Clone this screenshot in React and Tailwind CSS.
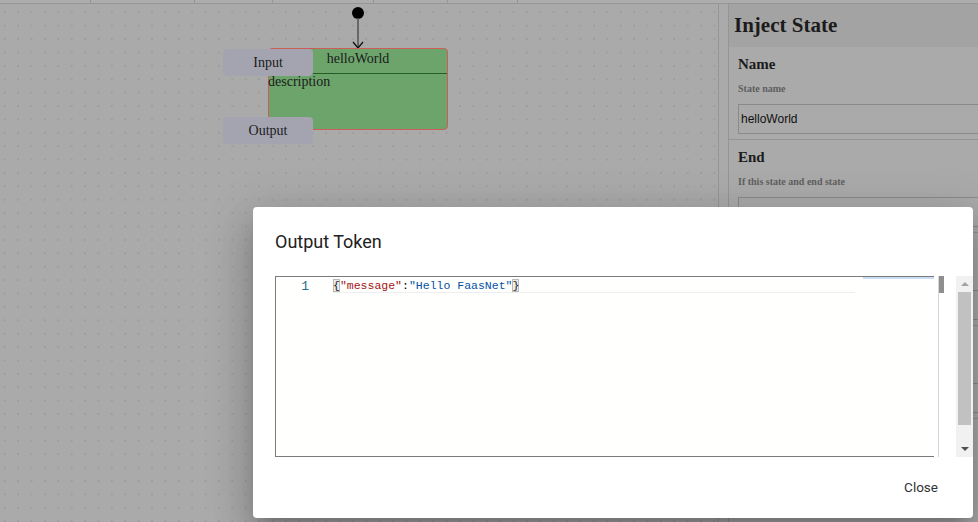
const sections = [
  { title: 'Name', label: 'State name', value: 'helloWorld' },
  { title: 'End', label: 'If this state and end state', value: 'True' },
  { title: 'Data', label: 'Inject data', value: '' },
  { title: 'Transition', label: 'Next state', value: '' },
];

function PanelSection({ title, label, value }) {
  return (
    <div className="border-b border-[#949494] px-[9px] pt-[8px] pb-[5px]">
      <div className="text-[15px] leading-[18px] font-bold">{title}</div>
      <div className="mt-[10px] text-[10px] leading-[12px] font-bold text-[#5f5f5f]">{label}</div>
      <div className="mt-[9px] h-[30px] w-[260px] border border-[#8a8a8a] px-[2px] flex items-center font-['Liberation_Sans',sans-serif] text-[12px] text-[#111]">
        {value}
      </div>
    </div>
  );
}

function Canvas() {
  return (
    <div className="relative w-[719px] border-r border-[#959595] bg-[radial-gradient(circle,#9d9d9d_0.8px,transparent_1px)] bg-[length:13.4px_13.4px] bg-[position:-2px_1.6px]">
      {/* start marker + arrow */}
      <svg className="absolute left-[350px] top-[3px]" width="16" height="42" viewBox="0 0 16 42">
        <circle cx="8" cy="6" r="6" fill="#000" />
        <line x1="8" y1="11" x2="8" y2="41" stroke="#505050" strokeWidth="1.5" />
        <polyline points="3,35 8,41 13,35" fill="none" stroke="#111" strokeWidth="1.3" />
      </svg>

      {/* state node */}
      <div className="absolute left-[268px] top-[44px] w-[180px] h-[82px] rounded-[4px] border border-[#cb5e59] bg-[#6ca46b]">
        <div className="h-[25px] border-b border-[#245f24] text-center text-[14px] leading-[18px] pt-[1px]">helloWorld</div>
        <div className="text-[14px] leading-[16px] -ml-px">description</div>
      </div>

      <div className="absolute left-[223px] top-[45px] w-[90px] h-[27px] rounded-[4px] bg-[#a4a4b1] flex items-center justify-center text-[14px]">
        Input
      </div>
      <div className="absolute left-[223px] top-[113px] w-[90px] h-[27px] rounded-[4px] bg-[#a4a4b1] flex items-center justify-center text-[14px]">
        Output
      </div>
    </div>
  );
}

function OutputDialog() {
  return (
    <div className="absolute left-[253px] top-[207px] w-[720px] h-[311px] rounded-[4px] bg-white shadow-[0_11px_15px_-7px_rgba(0,0,0,0.2),0_24px_38px_3px_rgba(0,0,0,0.14),0_9px_46px_8px_rgba(0,0,0,0.12)] font-['Roboto',sans-serif]">
      <div className="pl-[22px] pt-[23px] h-[69px] text-[18px] leading-[24px] text-[#212121]">Output Token</div>

      <div className="ml-[22px] flex h-[181px]">
        {/* editor */}
        <div className="flex w-[659px] border-l border-t border-b border-[#7a7a7a] bg-[#fffffe]">
          <div className="w-[57px] pr-[24px] pt-[2px] text-right font-['Liberation_Mono',monospace] text-[13px] leading-[15px] text-[#1f6f8b]">1</div>
          <div className="w-[530px]">
            <div className="w-[522px] h-[16px] pt-px border-b border-[#eeeeee] font-['Liberation_Mono',monospace] text-[11.5px] leading-[15px] whitespace-pre">
              <span className="bg-[#ececec] shadow-[inset_0_0_0_1px_#b9b9b9]">{'{'}</span>
              <span className="text-[#a31515]">"message"</span>
              <span className="text-black">:</span>
              <span className="text-[#0451a5]">"Hello FaasNet"</span>
              <span className="bg-[#ececec] shadow-[inset_0_0_0_1px_#b9b9b9]">{'}'}</span>
            </div>
          </div>
          <div className="flex-1">
            <div className="h-[2px] bg-[#c9def6]" />
          </div>
        </div>
        {/* overview ruler */}
        <div className="w-[10px] flex">
          <div className="w-[4px]" />
          <div className="w-[1px] bg-[#d6d6d6]" />
          <div className="w-[5px]">
            <div className="h-[17px] bg-[#8e8e8e]" />
          </div>
        </div>
        <div className="w-[12px]" />
        {/* scrollbar */}
        <div className="w-[17px] bg-[#f1f1f1] flex flex-col items-center">
          <div className="h-[16px] flex items-center justify-center">
            <div className="w-0 h-0 border-l-[4px] border-r-[4px] border-b-[4px] border-l-transparent border-r-transparent border-b-[#a3a3a3]" />
          </div>
          <div className="w-[13px] h-[133px] bg-[#c1c1c1]" />
          <div className="flex-1 flex items-end justify-center pb-[6px]">
            <div className="w-0 h-0 border-l-[4px] border-r-[4px] border-t-[4px] border-l-transparent border-r-transparent border-t-[#505050]" />
          </div>
        </div>
      </div>

      <div className="flex justify-end pr-[35px] pt-[22px]">
        <span className="text-[13.5px] leading-[16px] text-[#333]">Close</span>
      </div>
    </div>
  );
}

export default function App() {
  return (
    <div className="relative w-[978px] h-[522px] overflow-hidden bg-[#aaaaaa] font-['Liberation_Serif',serif] text-[#1b1b1b]">
      {/* toolbar strip */}
      <div className="flex h-[4px] border-b border-[#969696] bg-[#adadad]">
        <div className="w-[91px] border-r border-[#969696]" />
        <div className="w-[104px] border-r border-[#969696]" />
        <div className="w-[78px] border-r border-[#969696]" />
        <div className="w-[101px] border-r border-[#969696]" />
        <div className="w-[74px] border-r border-[#969696]" />
        <div className="w-[70px] border-r border-[#969696]" />
        <div className="flex-1" />
      </div>

      <div className="flex h-[518px]">
        <Canvas />
        <div className="w-[9px]" />
        <div className="flex-1 border-l border-[#959595] overflow-hidden">
          <div className="h-[43px] bg-[#a3a3a3] pl-[5px] flex items-center text-[21px] font-bold">Inject State</div>
          {sections.map((s) => (
            <PanelSection key={s.title} {...s} />
          ))}
        </div>
      </div>

      <OutputDialog />
    </div>
  );
}
